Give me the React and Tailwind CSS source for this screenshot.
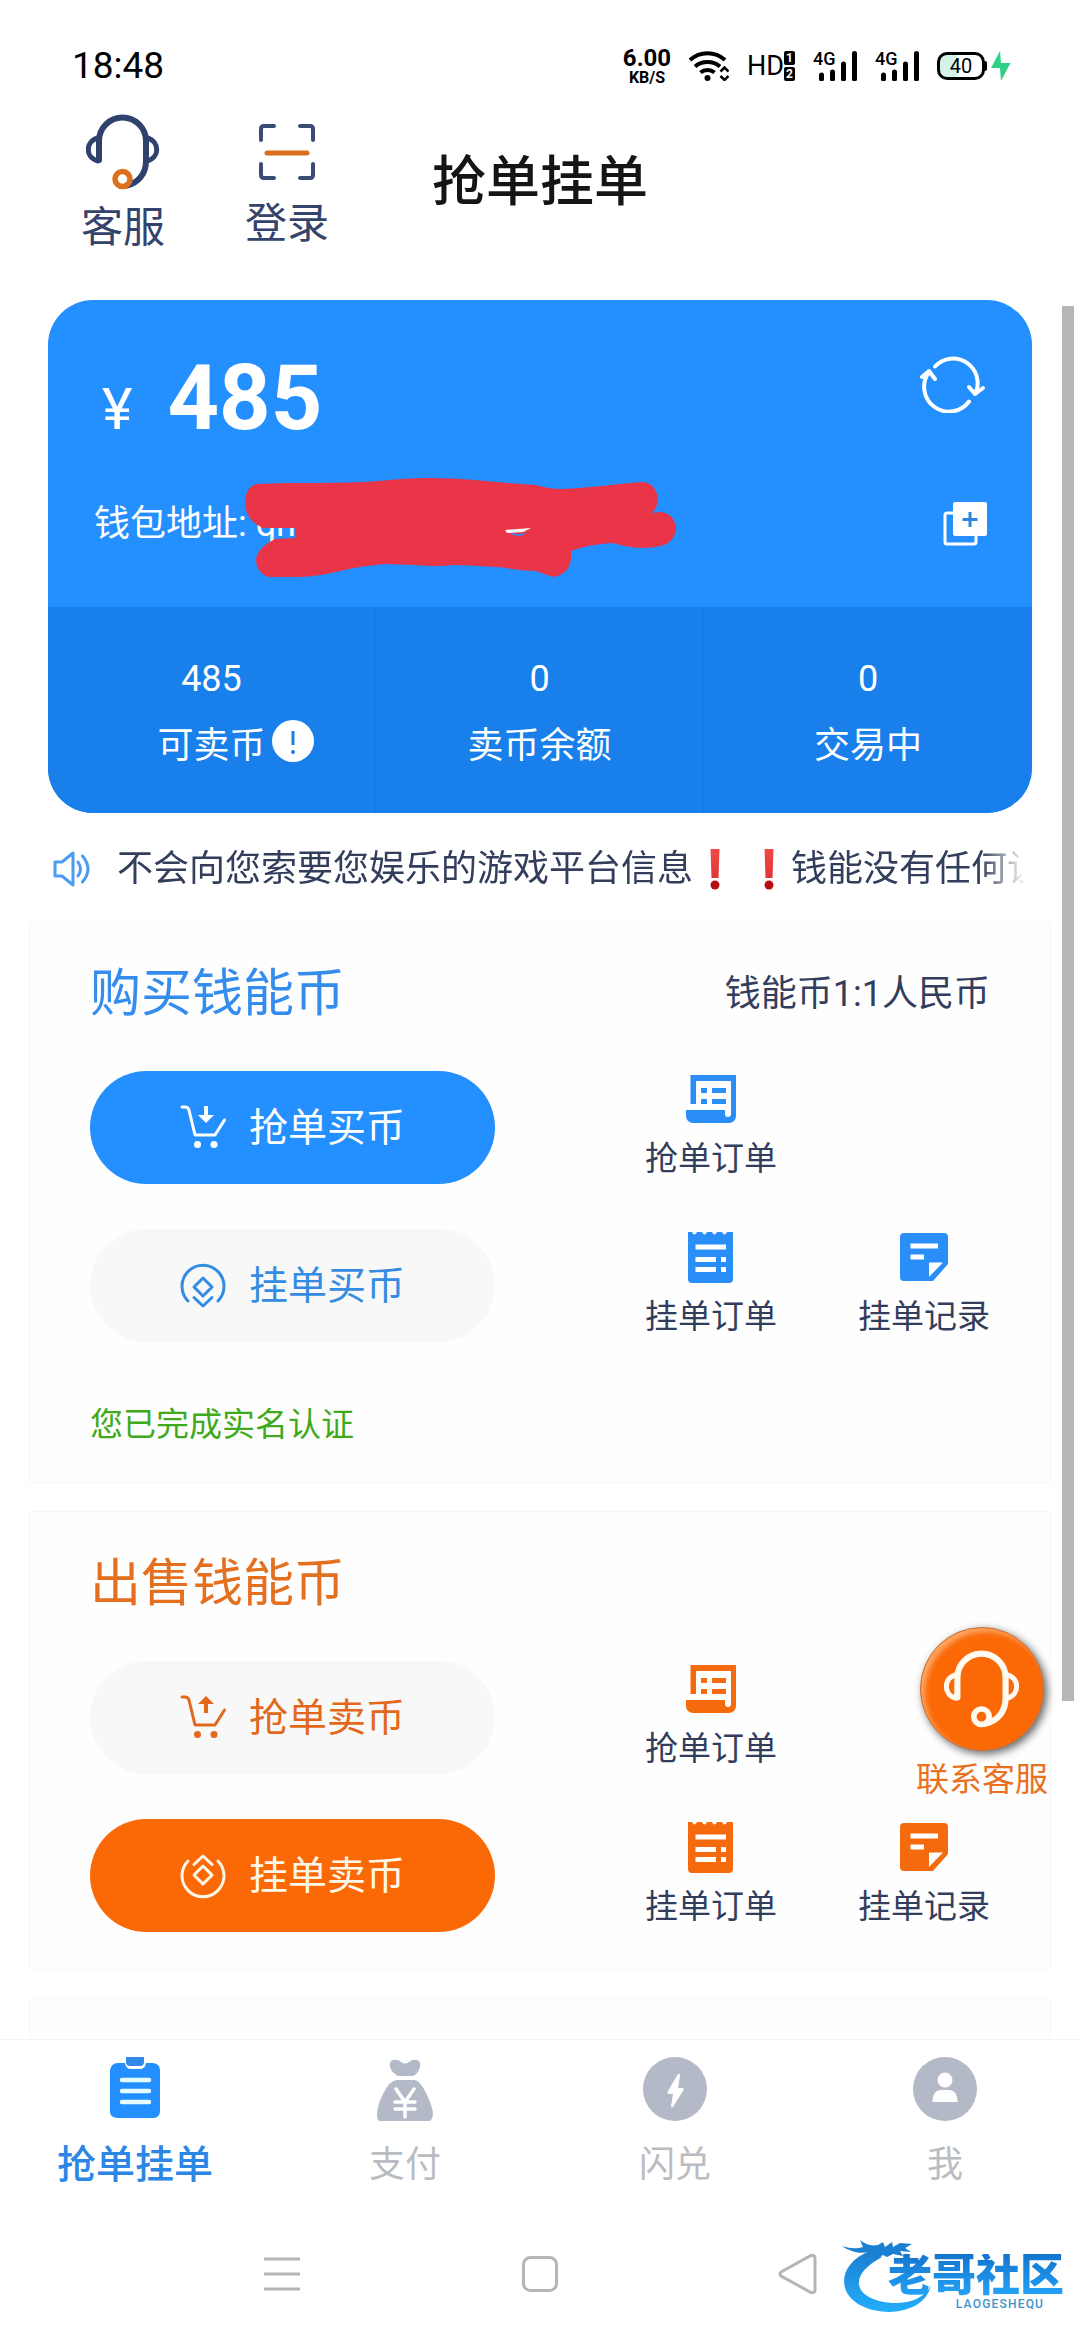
const FONT = "font-[Roboto,'Noto_Sans_CJK_SC',sans-serif]";

function HeadsetIcon({ className, mic }) {
  return (
    <svg viewBox="0 0 74 76" fill="none" strokeLinecap="round" className={className}>
      <path d="M13 46V27a23.5 23.5 0 0 1 47 0v20c0 13-8 22-19 24.5" stroke="currentColor" strokeWidth="6" />
      <path d="M12 24C-1 27-1 44 12 47M61 24C74 27 74 44 61 47" stroke="currentColor" strokeWidth="5" />
      <circle cx="36.5" cy="65" r="7.5" stroke={mic} strokeWidth="5.5" />
    </svg>
  );
}

function ScanIcon() {
  return (
    <svg viewBox="0 0 58 64" fill="none" strokeLinecap="round" className="h-[68px] w-[58px]">
      <path
        d="M3 20V9q0-3 3-3h10M42 6h10q3 0 3 3v11M3 44v11q0 3 3 3h10M42 58h10q3 0 3-3V44"
        stroke="#3b4b75"
        strokeWidth="4"
      />
      <path d="M9 33h40" stroke="#d96f1e" strokeWidth="5" />
    </svg>
  );
}

function SignalIcon() {
  return (
    <div className="relative h-[30px] w-11">
      <span className="absolute -top-px left-0 text-[18px] leading-[18px] font-medium">4G</span>
      <svg viewBox="0 0 44 30" className="h-[30px] w-11">
        <path d="M8.5 24v4M19.5 21v7M30.5 13v15M41.5 2.5V28" stroke="#000" strokeWidth="5" strokeLinecap="round" />
      </svg>
    </div>
  );
}

function StatusBar() {
  return (
    <div className="flex items-center justify-between pt-[46px] pr-[69px] pl-[72px] text-black">
      <span className="text-[37px] leading-10">18:48</span>
      <div className="flex h-10 items-center gap-[18px]">
        <div className="flex w-12 flex-col items-center font-bold">
          <span className="text-[24px] leading-[24px]">6.00</span>
          <span className="text-[16px] leading-[16px]">KB/S</span>
        </div>
        <svg viewBox="0 0 40 30" fill="none" stroke="#000" strokeWidth="4" className="h-[30px] w-10">
          <path d="M1 9c10-9 25-9 35 0M6 15.5c7-6 18-6 25 0M11.5 21.5c4-3.5 10-3.5 14 0" />
          <circle cx="18.5" cy="27" r="3" fill="#000" stroke="none" />
          <path d="M31.5 20.5l4-4 4 4M31.5 25l4 4 4-4" strokeWidth="2.5" />
        </svg>
        <div className="flex w-12 items-center">
          <span className="text-[27px] leading-[30px]">HD</span>
          <span className="flex flex-col gap-0.5 text-[12px] leading-[14px] font-bold text-white">
            <span className="w-[11px] rounded-xs bg-black text-center">1</span>
            <span className="w-[11px] rounded-xs bg-black text-center">2</span>
          </span>
        </div>
        <SignalIcon />
        <SignalIcon />
        <div className="flex items-center gap-1">
          <div className="flex items-center">
            <span className="h-7 w-12 rounded-[10px] border-3 border-black bg-linear-to-r from-[#d3f3e8] from-40% to-white to-40% text-center text-[20px] leading-[22px]">
              40
            </span>
            <span className="h-2.5 w-0.5 rounded-r bg-black" />
          </div>
          <svg viewBox="0 0 20 30" className="h-[30px] w-5">
            <path d="M9 0L0 17h9L10 30 19.5 12H10Z" fill="#2fd184" />
          </svg>
        </div>
      </div>
    </div>
  );
}

function Header() {
  return (
    <header className="grid h-[194px] grid-cols-[1fr_auto_1fr] items-center">
      <div className="flex items-center gap-20 pl-[81px] text-[42px] leading-[48px] text-[#34436b]">
        <button className="flex flex-col items-center gap-3.5">
          <HeadsetIcon className="h-[76px] w-[74px] text-[#2f426d]" mic="#dd701d" />
          客服
        </button>
        <button className="flex flex-col items-center gap-3.5">
          <ScanIcon />
          登录
        </button>
      </div>
      <h1 className="text-[54px] leading-[64px] font-medium text-[#151515]">抢单挂单</h1>
    </header>
  );
}

function WalletCard() {
  return (
    <section className="mx-12 overflow-hidden rounded-[45px] bg-[#248fff] text-white">
      <div className="pt-[53px] pr-[45px] pb-[59px] pl-[46px]">
        <div className="flex items-start justify-between">
          <p className="flex h-[92px] items-baseline gap-[35px] pl-2">
            <span className="text-[58px] leading-[58px]">¥</span>
            <span className="text-[90px] leading-[92px] font-bold">485</span>
          </p>
          <button aria-label="刷新" className="mt-0.5">
            <svg viewBox="0 0 70 58" fill="none" stroke="currentColor" strokeWidth="4" strokeLinecap="round" strokeLinejoin="round" className="h-[58px] w-[70px]">
              <path d="M18 11.5A24.5 24.5 0 0 1 58 39M52 32l6 7 8-6" />
              <path d="M52 46.5A24.5 24.5 0 0 1 12 17M5 22l7-6 6 8" />
            </svg>
          </button>
        </div>
        <div className="mt-[55px] flex items-center justify-between">
          <div className="relative text-[36px] leading-[48px]">
            钱包地址: qn
            {/* address is scribbled over */}
            <svg viewBox="0 0 432 100" className="absolute -top-[22px] left-[151px] h-[100px] w-[432px]">
              <path
                fill="#ea3548"
                fillRule="evenodd"
                d="M0 24Q1 8 12 6C50 4 95 6 134 3Q160 0 184 0C225 0 250 5 291 7Q304 11 317 11C345 10 370 6 398 4Q410 5 413 20Q413 29 407 35L415 34Q429 35 431 50Q430 64 416 68Q397 72 380 68L367 65Q345 66 326 73Q328 95 309 99Q301 97 291 93C270 93 262 89 250 89Q220 87 210 87Q190 89 170 87L139 86Q118 88 99 92Q72 99 54 99H23Q11 94 11 82Q12 70 30 61L50 60V50H18Q0 42 0 24ZM260 51Q272 62 288 50L276 58 268 57Z"
              />
              <path d="M260 52l26-2-8 4-16 1z" fill="#fff" />
            </svg>
          </div>
          <button aria-label="复制">
            <svg viewBox="0 0 44 44" fill="none" className="size-11">
              <path d="M11 11H4q-2 0-2 2v27q0 2 2 2h27q2 0 2-2v-6" stroke="currentColor" strokeWidth="3" />
              <rect x="10" width="34" height="34" rx="2" fill="currentColor" />
              <path d="M27 10v15M19.5 17.5h15" stroke="#2f86e0" strokeWidth="3" />
            </svg>
          </button>
        </div>
      </div>

      <div className="grid grid-cols-3 bg-[#187feb] text-center text-[36px] leading-[48px]">
        <div className="flex flex-col items-center gap-[19px] border-r border-[#1678df] pt-12 pb-[43px]">
          <span>485</span>
          <span className="relative">
            可卖币
            <svg viewBox="0 0 42 42" className="absolute -top-0.5 left-full ml-1.5 size-[42px]">
              <circle cx="21" cy="21" r="21" fill="#fff" />
              <path d="M21 11v14" stroke="#187feb" strokeWidth="3" />
              <circle cx="21" cy="32" r="2" fill="#187feb" />
            </svg>
          </span>
        </div>
        <div className="flex flex-col items-center gap-[19px] border-r border-[#1678df] pt-12 pb-[43px]">
          <span>0</span>
          <span>卖币余额</span>
        </div>
        <div className="flex flex-col items-center gap-[19px] pt-12 pb-[43px]">
          <span>0</span>
          <span>交易中</span>
        </div>
      </div>
    </section>
  );
}

function ExclaimMark() {
  return (
    <svg viewBox="0 0 44 44" className="h-11 w-11 shrink-0">
      <defs>
        <linearGradient id="exclaim" x1="0" y1="0" x2="0" y2="1">
          <stop offset="0" stopColor="#f24a48" />
          <stop offset="1" stopColor="#e03434" />
        </linearGradient>
      </defs>
      <path d="M17.5 2h9l-1 29h-7z" fill="url(#exclaim)" />
      <circle cx="22" cy="38" r="4.5" fill="#b50f12" />
    </svg>
  );
}

function Notice() {
  return (
    <div className="mt-8 mr-[54px] ml-[53px] flex items-center gap-[26px] text-[36px] leading-[48px] text-[#333d5c]">
      <svg viewBox="0 0 38 38" fill="none" stroke="#4a9cf0" strokeWidth="3" strokeLinejoin="round" className="size-[38px] shrink-0">
        <path d="M2 12h7L20 3v32L9 26H2Z" />
        <path d="M25 12q5 7 0 14M29.5 6q11 13 0 26" strokeLinecap="round" />
      </svg>
      <p className="flex min-w-0 items-center overflow-hidden mask-r-from-95% whitespace-nowrap">
        不会向您索要您娱乐的游戏平台信息
        <ExclaimMark />
        <span className="w-2.5 shrink-0" />
        <ExclaimMark />
        钱能没有任何让
      </p>
    </div>
  );
}

function CartIcon({ sell }) {
  return (
    <svg viewBox="0 0 46 46" fill="none" stroke="currentColor" strokeWidth="3" strokeLinecap="round" strokeLinejoin="round" className="size-[46px]">
      <path d="M2 2h3q3 0 4 3l6 25h20l9.5-15" />
      <g fill="currentColor" stroke="none">
        <circle cx="17.5" cy="39.5" r="3.5" />
        <circle cx="34" cy="39.5" r="3.5" />
        <path d={sell ? "M26 1l8 8h-6v9h-4V9h-6z" : "M24 1h4v9h6l-8 8-8-8h6z"} />
      </g>
    </svg>
  );
}

function CoinIcon({ sell }) {
  return (
    <svg viewBox="0 0 46 46" fill="none" stroke="currentColor" strokeWidth="3" strokeLinecap="round" strokeLinejoin="round" className="size-[46px]">
      <g transform={sell ? "matrix(1 0 0 -1 0 46)" : undefined}>
        <path d="M8 38a21 21 0 1 1 30 0" />
        <path d="M23 15l9 9-9 9-9-9ZM14 34.5l9 8.5 9-8.5" />
      </g>
    </svg>
  );
}

function GrabOrderIcon() {
  return (
    <svg viewBox="0 0 56 56" fill="currentColor" className="size-14">
      <path d="M7.5 4H53v41a7 7 0 0 1-7 7H10a7 7 0 0 1-7-7v-6h39v4a3 3 0 0 0 6 0V10H13v23H7.5Z" />
      <path d="M18 17h6v5h-6zM29 17h14v5H29zM18 28h6v5h-6zM29 28h14v5H29z" />
    </svg>
  );
}

function ListOrderIcon() {
  return (
    <svg viewBox="0 0 56 56" fill="currentColor" className="size-14">
      <path d="M5 3h4q2.5 5 5 0h5q2.5 5 5 0h5q2.5 5 5 0h5q2.5 5 5 0h6v47a4 4 0 0 1-4 4H9a4 4 0 0 1-4-4Z" />
      <path d="M12.5 15.5H43v5H12.5zM12.5 28H33v5H12.5zM38 28h5v5h-5zM12.5 38H33v5H12.5zM38 38h5v5h-5z" fill="#fff" />
    </svg>
  );
}

function RecordIcon() {
  return (
    <svg viewBox="0 0 56 56" fill="currentColor" className="size-14">
      <path d="M8 4h40a4 4 0 0 1 4 4v27L37 52H8a4 4 0 0 1-4-4V8a4 4 0 0 1 4-4Z" />
      <path d="M14.5 14.5H42v5H14.5zM14.5 25.5H28v5H14.5zM33 33.5h14L33 48z" fill="#fff" />
    </svg>
  );
}

function ActionButton({ icon, label, className }) {
  return (
    <button className={`flex h-[113px] w-[45%] items-center justify-center gap-[23px] rounded-full text-[39px] leading-[48px] ${className}`}>
      {icon}
      {label}
    </button>
  );
}

function Shortcut({ icon, label, className }) {
  return (
    <button className={`flex flex-col items-center gap-3 ${className}`}>
      {icon}
      <span className="text-[33px] leading-10 text-[#333d5c]">{label}</span>
    </button>
  );
}

function TradePanel({ title, note, titleColor, iconColor, grabButton, listButton, footer }) {
  return (
    <section className="mx-[29px] mt-7 border border-[#f8f8f8] bg-[#fefefe] px-[60px] pt-10 pb-[37px]">
      <div className="flex items-center justify-between">
        <h2 className={`text-[51px] leading-[64px] ${titleColor}`}>{title}</h2>
        {note && <span className="text-[36px] leading-[48px] text-[#333d5c]">{note}</span>}
      </div>
      <div className="mt-[45px] flex flex-col gap-[45px]">
        <div className="flex items-start justify-between">
          {grabButton}
          <div className="grid grid-cols-2 gap-[81px]">
            <Shortcut icon={<GrabOrderIcon />} label="抢单订单" className={iconColor} />
          </div>
        </div>
        <div className="flex items-start justify-between">
          {listButton}
          <div className="grid grid-cols-2 gap-[81px]">
            <Shortcut icon={<ListOrderIcon />} label="挂单订单" className={iconColor} />
            <Shortcut icon={<RecordIcon />} label="挂单记录" className={iconColor} />
          </div>
        </div>
      </div>
      {footer}
    </section>
  );
}

function ContactButton() {
  return (
    <button className="absolute right-8 bottom-[239px] flex w-[132px] flex-col items-center gap-[9px] text-[33px] leading-10 text-[#e9711f]">
      <span className="flex size-[124px] items-center justify-center rounded-full border border-[#c9743a] bg-[#fb6907] text-[#fffaf0] shadow-[3px_3px_8px_rgba(0,0,0,0.6),inset_4px_4px_5px_rgba(255,190,140,0.7)]">
        <HeadsetIcon className="h-[78px] w-[76px]" mic="currentColor" />
      </span>
      联系客服
    </button>
  );
}

const tabs = [
  {
    label: '抢单挂单',
    active: true,
    icon: (
      <svg viewBox="0 0 64 64" className="size-16">
        <path d="M14 6h8q1 6 6 6h9q5 0 6-6h7q7 1 7 7v42q-1 6-7 6H14q-7-1-7-6V13q1-6 7-7Z" fill="#248fff" />
        <path d="M23 0h18v5q0 4-4 4H27q-4 0-4-4z" fill="#3389e8" />
        <path d="M19 23h27M19 34h27M19 45h27" stroke="#e4fbff" strokeWidth="4.5" strokeLinecap="round" />
      </svg>
    ),
  },
  {
    label: '支付',
    icon: (
      <svg viewBox="0 0 64 64" className="size-16">
        <path d="M20 3q5-1 8 2 4 3 8 0 3-3 8-2 4 1 3 7-2 7-7 9H25q-6-3-8-9-1-6 3-7ZM24 23h17q6 0 12 13 7 14 7 22-1 7-7 7H10q-6 0-6-7 0-9 6-21 7-14 14-14Z" fill="#b3b9c7" />
        <path d="M23 32l9 13 9-13M32 45v15M22 45h20M22 52h20" stroke="#fff" strokeWidth="3.5" strokeLinecap="round" fill="none" />
      </svg>
    ),
  },
  {
    label: '闪兑',
    icon: (
      <svg viewBox="0 0 64 64" className="size-16">
        <circle cx="32" cy="32" r="32" fill="#b3b9c7" />
        <path d="M35 17q2-1 2 2l-2 12h5q1 1 0 3L30 50q-2 1-2-1l2-12h-5q-1-1 0-3Z" fill="#fff" />
      </svg>
    ),
  },
  {
    label: '我',
    icon: (
      <svg viewBox="0 0 64 64" className="size-16">
        <circle cx="32" cy="32" r="32" fill="#b3b9c7" />
        <circle cx="32" cy="23" r="7.5" fill="#fff" />
        <path d="M19.5 45q0-12 9-12h7q9 0 9 12Z" fill="#fff" />
      </svg>
    ),
  },
];

function TabBar() {
  return (
    <nav className="grid grid-cols-4 border-t border-[#f3f3f3] bg-white pt-[17px] pb-[19px]">
      {tabs.map((tab) => (
        <a
          key={tab.label}
          href="#"
          className={`flex flex-col items-center gap-5 leading-[48px] ${tab.active ? 'text-[39px] font-medium text-[#2c86e6]' : 'text-[36px] text-[#bbbcc1]'}`}
        >
          {tab.icon}
          {tab.label}
        </a>
      ))}
    </nav>
  );
}

function SystemNav() {
  return (
    <div className="flex h-[132px] items-center justify-center gap-[218px] bg-white text-[#b5b5b5]">
      <button aria-label="最近任务">
        <svg viewBox="0 0 40 40" fill="none" stroke="currentColor" strokeWidth="3" className="size-10">
          <path d="M2 5h36M2 20h36M2 35h36" />
        </svg>
      </button>
      <button aria-label="主页">
        <svg viewBox="0 0 40 40" fill="none" stroke="currentColor" strokeWidth="3" className="size-10">
          <rect x="3.5" y="3.5" width="33" height="33" rx="7" />
        </svg>
      </button>
      <button aria-label="返回">
        <svg viewBox="0 0 40 40" fill="none" stroke="currentColor" strokeWidth="3" className="size-10">
          <path d="M3 18L33 1.5q4-1 4 3v31q0 4-4 3L3 22q-2-2 0-4Z" />
        </svg>
      </button>
    </div>
  );
}

function Watermark() {
  return (
    <div className="absolute right-4 bottom-6 h-[78px] w-[222px]">
      <svg viewBox="0 0 222 78" className="absolute inset-0">
        <defs>
          <linearGradient id="dragon" x1="0" y1="0" x2="0" y2="1">
            <stop offset="0" stopColor="#1b7ed0" />
            <stop offset="1" stopColor="#22aefb" />
          </linearGradient>
        </defs>
        <path d="M28 13C-12 28-6 73 48 74Q82 72 89 48Q78 66 50 65C12 62 4 38 40 19Z" fill="url(#dragon)" />
        <path d="M0 8q12 4 21 1l-3-7q8 7 18 5l5-3 2 5 7-5 1 5 7-4 12 1-7 4 6 4-11-1 3 5-10-2-6 3-4-2-8 5 2-6-7 3 2-5q-14 2-20-1Q5 12 0 8Z" fill="#1c80d2" />
      </svg>
      <div className="absolute right-0 bottom-1.5 flex flex-col items-end">
        <span className="bg-linear-to-b from-[#1474cd] to-[#25a5fa] bg-clip-text text-[44px] leading-[44px] font-black text-transparent">老哥社区</span>
        <span className="w-[128px] text-center text-[12px] leading-3 font-medium tracking-widest text-[#3e93cf]">LAOGESHEQU</span>
      </div>
    </div>
  );
}

export default function App() {
  return (
    <div className={`relative flex h-screen flex-col bg-white ${FONT}`}>
      <StatusBar />
      <Header />
      <main className="relative min-h-0 flex-1 overflow-hidden pt-5">
        <WalletCard />
        <Notice />
        <TradePanel
          title="购买钱能币"
          note="钱能币1:1人民币"
          titleColor="text-[#348ced]"
          iconColor="text-[#2a8ef8]"
          grabButton={<ActionButton icon={<CartIcon />} label="抢单买币" className="bg-[#248fff] text-white" />}
          listButton={<ActionButton icon={<CoinIcon />} label="挂单买币" className="bg-[#f8f8f8] text-[#348ce2]" />}
          footer={<p className="mt-[63px] text-[33px] leading-10 text-[#3eaa1c]">您已完成实名认证</p>}
        />
        <TradePanel
          title="出售钱能币"
          titleColor="text-[#e4701f]"
          iconColor="text-[#f56a0c]"
          grabButton={<ActionButton icon={<CartIcon sell />} label="抢单卖币" className="bg-[#f8f8f8] text-[#e2691c]" />}
          listButton={<ActionButton icon={<CoinIcon sell />} label="挂单卖币" className="bg-[#fb6907] text-[#fff8e8]" />}
        />
        <section className="mx-[29px] mt-7 h-52 border border-[#f8f8f8] bg-[#fefefe]" />
        <div className="absolute top-[26px] right-1.5 bottom-[338px] w-3 bg-[#b7b7b7]" />
        <ContactButton />
      </main>
      <TabBar />
      <SystemNav />
      <Watermark />
    </div>
  );
}
